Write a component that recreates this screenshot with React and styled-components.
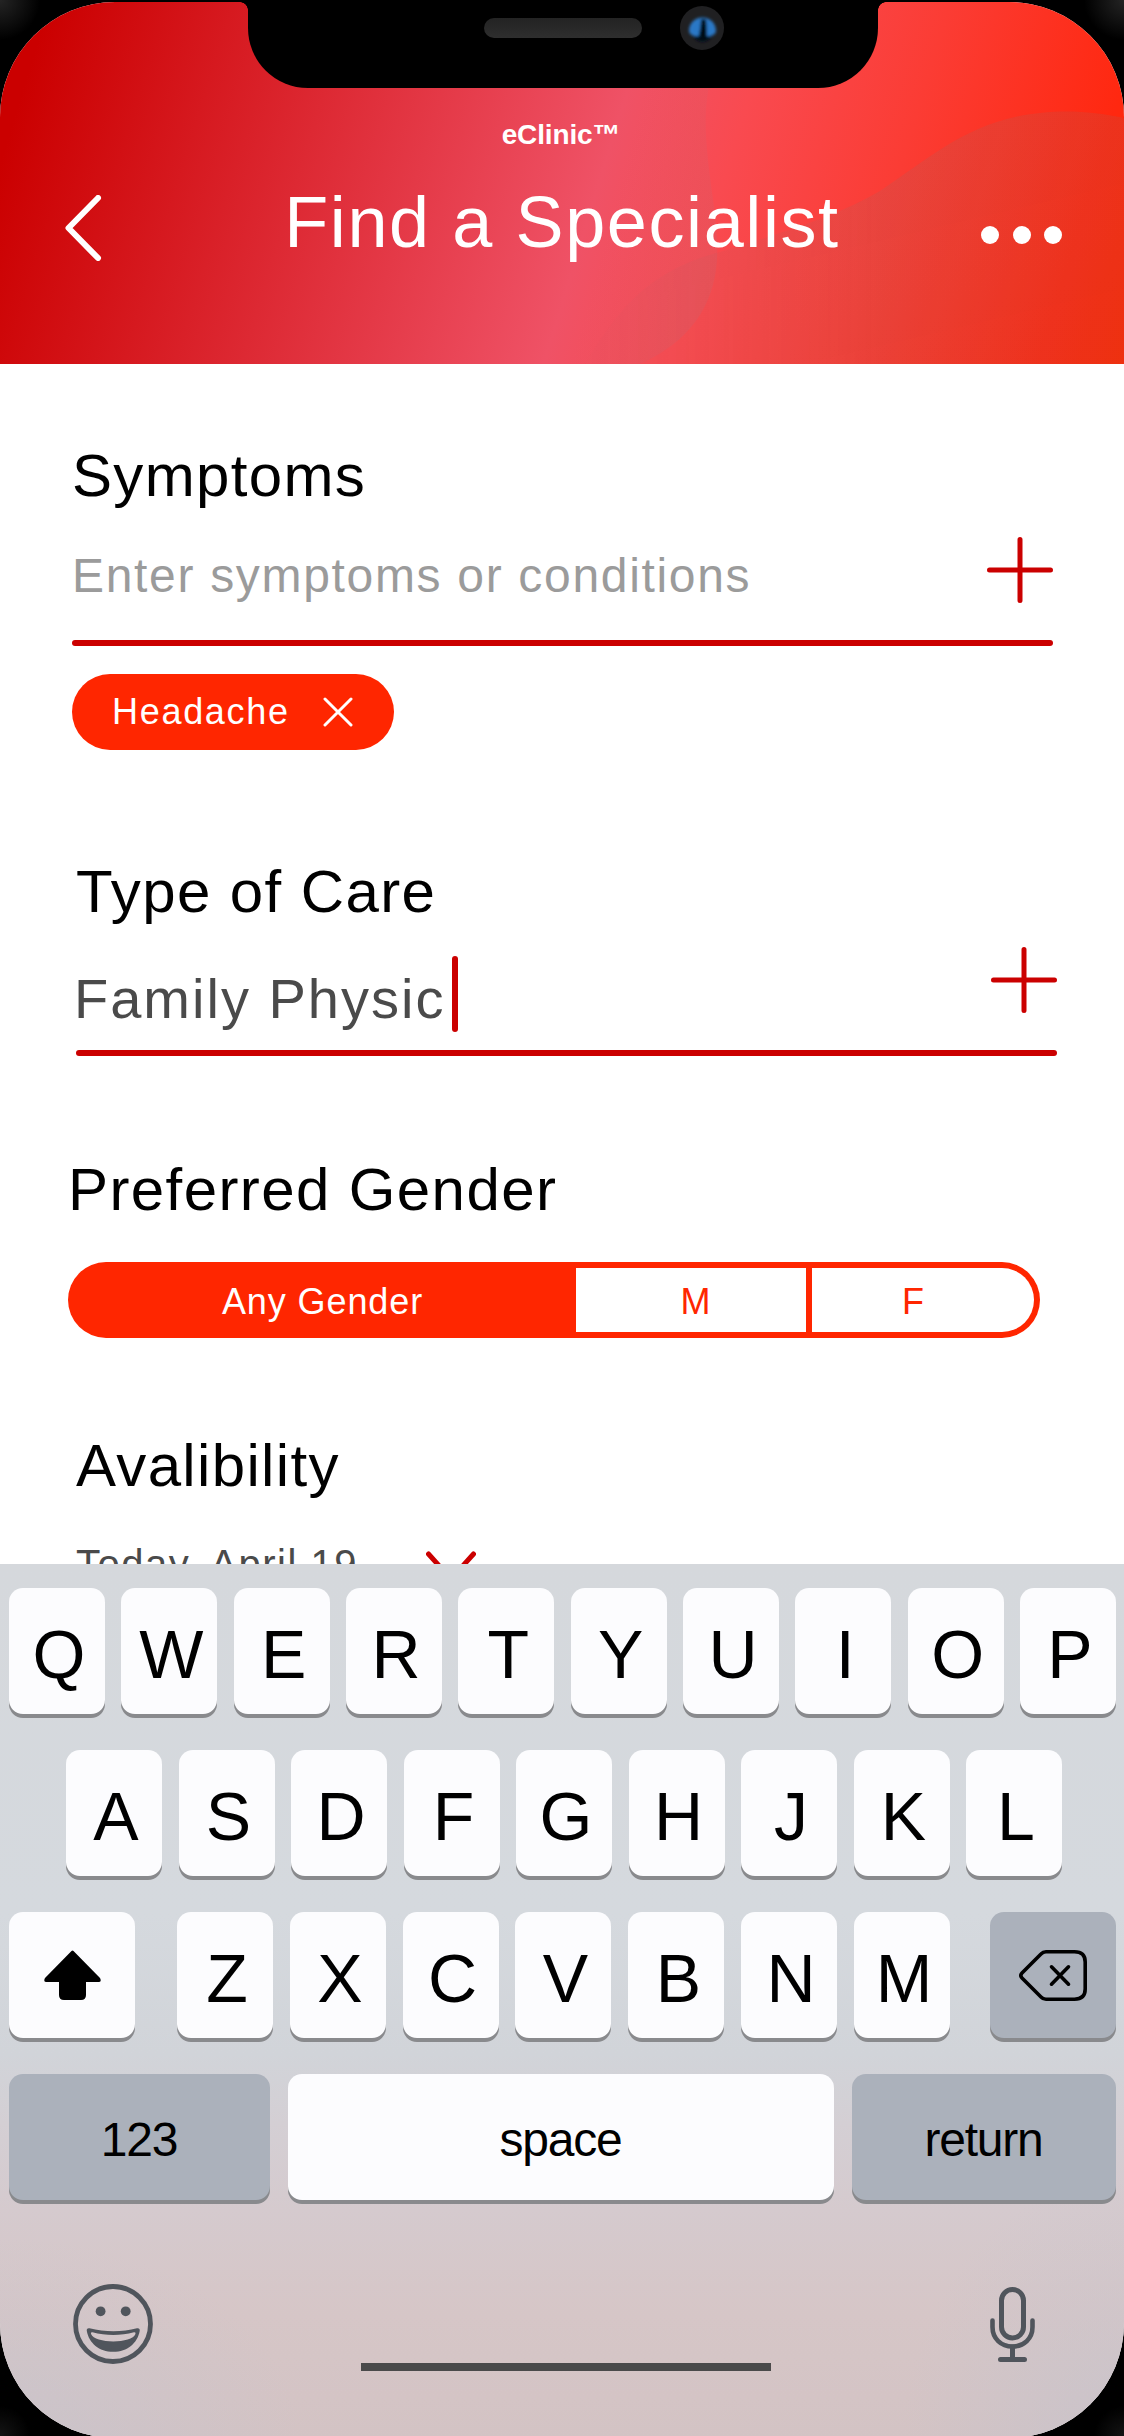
import React from "react";
import styled, { createGlobalStyle } from "styled-components";

const GlobalStyle = createGlobalStyle`
  * { box-sizing: border-box; }
  html, body { margin: 0; padding: 0; background: #000; }
  body {
    width: 1124px;
    height: 2436px;
    overflow: hidden;
    font-family: "Liberation Sans", Arial, Helvetica, sans-serif;
    color: #000;
  }
  button { border: 0; padding: 0; background: none; font: inherit; color: inherit; }
  svg { display: block; }
`;

const Device = styled.div`
  width: 1124px;
  height: 2436px;
  overflow: hidden;
  padding-top: 2px;
  background:
    radial-gradient(circle at 0 0, #242424 0, #161616 16px, #000 40px) 0 0 / 60px 60px no-repeat,
    radial-gradient(circle at 100% 0, #242424 0, #161616 16px, #000 40px) 100% 0 / 60px 60px no-repeat,
    radial-gradient(circle at 0 100%, #141414 0, #000 30px) 0 100% / 60px 60px no-repeat,
    radial-gradient(circle at 100% 100%, #141414 0, #000 30px) 100% 100% / 60px 60px no-repeat,
    #000;
`;

const Screen = styled.main`
  position: relative;
  display: flex;
  flex-direction: column;
  height: 2436px;
  border-radius: 115px;
  overflow: hidden;
  background: #fff;
`;

/* ---------- hardware notch ---------- */

const Notch = styled.div`
  position: absolute;
  top: -2px;
  left: 248px;
  width: 630px;
  height: 88px;
  border-radius: 0 0 60px 60px;
  background: #000;
  display: flex;
  align-items: flex-start;
  padding: 6px 0 0 236px;

  &::before,
  &::after {
    content: "";
    position: absolute;
    top: 2px;
    width: 8px;
    height: 8px;
  }
  &::before {
    left: -8px;
    background: radial-gradient(circle at 0 100%, transparent 7.5px, #000 8px);
  }
  &::after {
    right: -8px;
    background: radial-gradient(circle at 100% 100%, transparent 7.5px, #000 8px);
  }
`;

const Speaker = styled.div`
  width: 158px;
  height: 20px;
  margin: 12px 38px 0 0;
  border-radius: 10px;
  background: linear-gradient(#232323, #2e2e2e);
`;

/* ---------- header ---------- */

const Header = styled.header`
  position: relative;
  flex: none;
  height: 362px;
  padding-top: 117px;
  color: #fff;
  background: linear-gradient(107deg, #cb0000 4%, #ef5266 53%, #f94a50 63%, #fb3c34 77%, #ff2810 93%, #ff2600 100%);
`;

const Waves = styled.svg`
  position: absolute;
  inset: 0;
`;

const Brand = styled.div`
  position: relative;
  font-size: 28px;
  line-height: 32px;
  font-weight: 700;
  letter-spacing: -0.15px;
  text-align: center;
  padding-right: 2px;
`;

const TitleRow = styled.div`
  position: relative;
  display: grid;
  grid-template-columns: 1fr auto 1fr;
  align-items: center;
  height: 80px;
  margin-top: 31px;
  padding: 0 62px 0 65px;
`;

const Title = styled.h1`
  margin: 0 3px 0 0;
  font-size: 72px;
  line-height: 80px;
  font-weight: 400;
  letter-spacing: 1.6px;
`;

const BackButton = styled.button`
  justify-self: start;
  padding-top: 12px;
`;

const MoreButton = styled.button`
  justify-self: end;
  display: flex;
  gap: 13.5px;
  padding-top: 26px;
`;

const Dot = styled.span`
  width: 18px;
  height: 18px;
  border-radius: 50%;
  background: #fff;
`;

/* ---------- form ---------- */

const Form = styled.form`
  flex: none;
  height: 1200px;
  overflow: hidden;
  padding-top: 77px;
`;

const Section = styled.section`
  margin: ${(p) => p.$top || 0}px 0 0 ${(p) => p.$left}px;
  width: ${(p) => p.$width || 981}px;
`;

const Heading = styled.h2`
  margin: 0;
  height: 68px;
  padding-top: 1px;
  font-size: 60px;
  line-height: 68px;
  font-weight: 400;
  letter-spacing: ${(p) => p.$spacing || 1.35}px;
  white-space: nowrap;
`;

const Field = styled.div`
  display: flex;
  justify-content: space-between;
  align-items: flex-start;
  height: ${(p) => p.$height}px;
  padding-top: ${(p) => p.$pad}px;
`;

const Placeholder = styled.span`
  padding-top: 11px;
  font-size: 48px;
  line-height: 56px;
  letter-spacing: 1.68px;
  color: #9b9b9b;
`;

const Entry = styled.span`
  display: flex;
  align-items: flex-start;
  margin: 9px 0 0 -2px;
  font-size: 56px;
  color: #4a4a4a;
`;

const EntryText = styled.span`
  padding-top: 11px;
  line-height: 64px;
  letter-spacing: 2px;
  white-space: pre;
`;

const Caret = styled.span`
  width: 6px;
  height: 76px;
  margin-left: 6.5px;
  border-radius: 3px;
  background: #cb0000;
`;

const Rule = styled.div`
  height: 6px;
  border-radius: 3px;
  background: #cb0000;
`;

const Chip = styled.div`
  display: flex;
  align-items: center;
  width: 322px;
  height: 76px;
  margin-top: 28px;
  padding-left: 40px;
  border-radius: 38px;
  background: #ff2600;
  color: #fff;
  font-size: 36px;
  letter-spacing: 1.7px;
`;

const ChipClose = styled.button`
  margin-left: 33px;
`;

const Segments = styled.div`
  display: grid;
  grid-template-columns: 502px 236px 222px;
  height: 76px;
  margin-top: 39px;
  padding: 6px;
  border-radius: 38px;
  background: #ff2600;
`;

const Segment = styled.button`
  padding: 3px ${(p) => p.$right || 0}px 0 ${(p) => p.$leftPad || 0}px;
  font-size: 36px;
  letter-spacing: ${(p) => (p.$active ? 0.9 : 0)}px;
  color: ${(p) => (p.$active ? "#fff" : "#ff2600")};
  background: ${(p) => (p.$active ? "transparent" : "#fff")};
  border-right: ${(p) => (p.$divider ? "6px solid #ff2600" : "0")};
  border-radius: ${(p) => (p.$last ? "0 32px 32px 0" : "0")};
`;

const DateRow = styled.div`
  display: flex;
  align-items: flex-start;
  margin-top: 41px;
  font-size: 40px;
  line-height: 48px;
  letter-spacing: 1.5px;
  color: #4a4a4a;
`;

const DateArrow = styled.svg`
  margin: 11px 0 0 68px;
`;

/* ---------- keyboard ---------- */

const Keyboard = styled.section`
  flex: none;
  height: 874px;
  padding: 24px 8px 0 9px;
  background:
    radial-gradient(ellipse 300px 200px at 0 100%, rgba(196, 196, 206, 0.6), rgba(196, 196, 206, 0)),
    radial-gradient(ellipse 220px 260px at 100% 100%, rgba(196, 196, 206, 0.6), rgba(196, 196, 206, 0)),
    linear-gradient(
      #d5d8dc 0,
      #d5d9de 40%,
      #d1d4d9 56%,
      #d4cfd4 64%,
      #d5cace 74%,
      #d6c6c7 86%,
      #d3c3c4 100%
    );
`;

const KeyRow = styled.div`
  display: flex;
  justify-content: space-between;
  height: 126px;
  margin-bottom: 36px;
  padding: 0 ${(p) => p.$inset || 0}px 0 ${(p) => (p.$inset ? p.$inset + 3 : 0)}px;
`;

const LetterGroup = styled.div`
  display: flex;
  justify-content: space-between;
  width: 773px;
  margin-left: 2px;
`;

const Key = styled.button`
  display: flex;
  justify-content: center;
  align-items: center;
  width: ${(p) => p.$width || 96}px;
  height: 126px;
  padding: ${(p) => (p.$icon ? "0" : p.$word ? "4px 1px 0 0" : "5px 0 0 4px")};
  border-radius: 14px;
  background: ${(p) => (p.$dark ? "#abb1bb" : "#fcfcfe")};
  box-shadow: 0 4px 0 #898a8d;
  font-size: ${(p) => (p.$word ? 48 : 68)}px;
  letter-spacing: ${(p) => (p.$word ? -1.2 : 0)}px;
`;

const BottomBar = styled.div`
  display: flex;
  align-items: flex-start;
  height: 87px;
  margin-top: 84px;
  padding-left: 64px;
`;

const HomeIndicator = styled.div`
  align-self: flex-end;
  width: 410px;
  height: 8px;
  margin: 0 219px 0 208px;
  background: #4a4a4a;
`;

const MicSlot = styled.div`
  padding-top: 3px;
`;

/* ---------- icons ---------- */

const Plus = () => (
  <svg width="66" height="66" viewBox="0 0 66 66" fill="none" stroke="#cb0000" strokeWidth="5" strokeLinecap="round">
    <path d="M33 2.5V63.5M2.5 33H63.5" />
  </svg>
);

const Camera = () => (
  <svg width="44" height="44" viewBox="0 0 44 44">
    <defs>
      <filter id="soft" x="-40%" y="-40%" width="180%" height="180%">
        <feGaussianBlur stdDeviation="1.7" />
      </filter>
    </defs>
    <circle cx="22" cy="22" r="22" fill="#202022" />
    <g filter="url(#soft)">
      <ellipse cx="22.500" cy="26" rx="10" ry="10" fill="#06101c" />
      <path d="M9 25C9 17 15 11.500 22.500 11.500S36 17 36 25C35 31 28 30 22.500 30S10 31 9 25Z" fill="#2b78c6" />
      <path d="M21 13H26C26.500 19 27 26 27 34H18C19.500 26 21 19 21 13Z" fill="#050a12" />
    </g>
  </svg>
);

const Smiley = () => (
  <svg width="80" height="80" viewBox="0 0 80 80" fill="#50555c">
    <circle cx="40" cy="40" r="37.500" fill="none" stroke="#50555c" strokeWidth="4.800" />
    <circle cx="27.600" cy="27.300" r="4.900" />
    <circle cx="52.700" cy="27.300" r="4.900" />
    <path
      fillRule="evenodd"
      d="M16.500 44.300C32 48.300 49 48.300 64 44.300C66 43.900 67 45 66.700 47C64.500 59 54.500 67.800 40.300 67.800C26 67.800 16 59 13.800 47C13.500 45 14.500 43.900 16.500 44.300ZM19.500 48.200C18 47.900 17.600 48.700 18.200 50.200C19.600 54.500 30 57.400 40.300 57.400C50.600 57.400 61 54.500 62.300 50.200C62.900 48.700 62.400 47.900 61 48.200C47.500 51.800 33 51.800 19.500 48.200Z"
    />
  </svg>
);

const Mic = () => (
  <svg width="45" height="76" viewBox="0 0 45 76" fill="none" stroke="#50555c" strokeWidth="5" strokeLinecap="round">
    <rect x="11.500" y="2.500" width="22" height="48.500" rx="11" />
    <path d="M2.500 33.500V40C2.500 51.500 11 59.500 22.500 59.500S42.500 51.500 42.500 40V33.500" strokeWidth="4.600" />
    <path d="M22.500 60V72M10.500 72.500H34.500" />
  </svg>
);

const Shift = () => (
  <svg width="57" height="50" viewBox="0 0 57 50">
    <path d="M27.500 1Q28.500 0 29.500 1L56 28Q58 32 54.500 32H42V45Q42 50 37 50H20Q15 50 15 45V32H2.500Q-1 32 1 28Z" />
  </svg>
);

const Backspace = () => (
  <svg width="68" height="51" viewBox="0 0 68 51" fill="none" stroke="#000" strokeWidth="3.600" strokeLinecap="round" strokeLinejoin="round">
    <path d="M27 1.800H55.500Q66.200 1.800 66.200 12V39Q66.200 49.200 55.500 49.200H27Q24 49.200 22 47L3 28Q0.600 25.500 3 23L22 4Q24 1.800 27 1.800Z" />
    <path d="M32.500 16.800L49.500 34.200M49.500 16.800L32.500 34.200" />
  </svg>
);

const letters = (text) => text.split("").map((c) => <Key key={c} type="button">{c}</Key>);

export default function App() {
  return (
    <>
      <GlobalStyle />
      <Device>
        <Screen>
          <Header>
            <Waves width="1124" height="362" viewBox="0 2 1124 362">
              <defs>
                <linearGradient id="pocket" gradientUnits="userSpaceOnUse" x1="620" y1="180" x2="716" y2="206">
                  <stop offset="0" stopColor="#b46a78" stopOpacity="0" />
                  <stop offset="1" stopColor="#a57588" stopOpacity="0.14" />
                </linearGradient>
                <linearGradient id="wave" gradientUnits="userSpaceOnUse" x1="900" y1="110" x2="960" y2="364">
                  <stop offset="0" stopColor="#797979" stopOpacity="0.14" />
                  <stop offset="1" stopColor="#797979" stopOpacity="0.13" />
                </linearGradient>
                <linearGradient id="waveFade" gradientUnits="userSpaceOnUse" x1="590" y1="0" x2="880" y2="0">
                  <stop offset="0" stopColor="#fff" stopOpacity="0.1" />
                  <stop offset="1" stopColor="#fff" stopOpacity="1" />
                </linearGradient>
                <mask id="waveMask">
                  <rect width="1124" height="364" fill="url(#waveFade)" />
                </mask>
              </defs>
              <path d="M560 0H735C712 60 704 95 706 135C708 180 719 220 717 260C714 305 690 342 640 364H560Z" fill="url(#pocket)" />
              <g mask="url(#waveMask)">
                <path d="M585 364C615 315 640 280 700 258C770 236 830 220 880 191C930 158 970 120 1040 113C1070 110 1095 112 1124 118V364Z" fill="url(#wave)" />
              </g>
            </Waves>
            <Brand>eClinic™</Brand>
            <TitleRow>
              <BackButton type="button" aria-label="Back">
                <svg width="37" height="66" viewBox="0 0 37 66" fill="none" stroke="#fff" strokeWidth="6" strokeLinecap="round" strokeLinejoin="round">
                  <path d="M33 3L3.500 33L33 63" />
                </svg>
              </BackButton>
              <Title>Find a Specialist</Title>
              <MoreButton type="button" aria-label="More">
                <Dot />
                <Dot />
                <Dot />
              </MoreButton>
            </TitleRow>
          </Header>
          <Notch>
            <Speaker />
            <Camera />
          </Notch>

          <Form>
            <Section $left={72}>
              <Heading>Symptoms</Heading>
              <Field $height={131} $pad={28}>
                <Placeholder>Enter symptoms or conditions</Placeholder>
                <Plus />
              </Field>
              <Rule />
              <Chip>
                Headache
                <ChipClose type="button" aria-label="Remove">
                  <svg width="30" height="30" viewBox="0 0 30 30" stroke="#fff" strokeWidth="3" strokeLinecap="round">
                    <path d="M2 2L28 28M28 2L2 28" />
                  </svg>
                </ChipClose>
              </Chip>
            </Section>

            <Section $left={76} $top={107}>
              <Heading $spacing={1.4}>Type of Care</Heading>
              <Field $height={125} $pad={22}>
                <Entry>
                  <EntryText>Family Physic</EntryText>
                  <Caret />
                </Entry>
                <Plus />
              </Field>
              <Rule />
            </Section>

            <Section $left={68} $top={99} $width={972}>
              <Heading $spacing={1.4}>Preferred Gender</Heading>
              <Segments>
                <Segment type="button" $active $right={5}>Any Gender</Segment>
                <Segment type="button" $divider $leftPad={9}>M</Segment>
                <Segment type="button" $last $right={20}>F</Segment>
              </Segments>
            </Section>

            <Section $left={76} $top={93}>
              <Heading $spacing={1.35}>Avalibility</Heading>
              <DateRow>
                Today, April 19
                <DateArrow width="50" height="32" viewBox="0 0 50 32" fill="none" stroke="#cb0000" strokeWidth="5" strokeLinecap="round" strokeLinejoin="round">
                  <path d="M2.500 3L25 28L47.500 3" />
                </DateArrow>
              </DateRow>
            </Section>
          </Form>

          <Keyboard>
            <KeyRow>{letters("QWERTYUIOP")}</KeyRow>
            <KeyRow $inset={54}>{letters("ASDFGHJKL")}</KeyRow>
            <KeyRow>
              <Key type="button" $width={126} $icon aria-label="Shift">
                <Shift />
              </Key>
              <LetterGroup>{letters("ZXCVBNM")}</LetterGroup>
              <Key type="button" $width={126} $dark $icon aria-label="Delete">
                <Backspace />
              </Key>
            </KeyRow>
            <KeyRow>
              <Key type="button" $width={261} $dark $word>123</Key>
              <Key type="button" $width={546} $word>space</Key>
              <Key type="button" $width={264} $dark $word>return</Key>
            </KeyRow>
            <BottomBar>
              <Smiley />
              <HomeIndicator />
              <MicSlot>
                <Mic />
              </MicSlot>
            </BottomBar>
          </Keyboard>
        </Screen>
      </Device>
    </>
  );
}
